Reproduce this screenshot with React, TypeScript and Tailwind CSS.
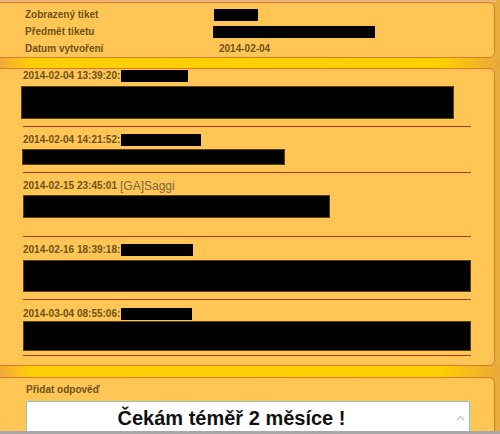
import React from 'react';

type Entry = {
    time: string;
    name?: string;
    hideW?: number;
    boxClass: string;
    head: string;
    after: string;
};

const entries: Entry[] = [
    { time: '2014-02-04 13:39:20:', hideW: 67, head: 'mt-0', boxClass: 'mt-[4px] ml-[-2px] w-[433px] h-[33px]', after: 'h-[6px]' },
    { time: '2014-02-04 14:21:52:', hideW: 80, head: 'mt-[6px]', boxClass: 'mt-[3px] ml-[-1px] w-[263px] h-[16px]', after: 'h-[6px]' },
    { time: '2014-02-15 23:45:01', name: '[GA]Saggi', head: 'mt-[6px]', boxClass: 'mt-[3px] w-[307px] h-[23px]', after: 'h-[17px]' },
    { time: '2014-02-16 18:39:18:', hideW: 72, head: 'mt-[6px]', boxClass: 'mt-[4px] w-[448px] h-[32px]', after: 'h-[6px]' },
    { time: '2014-03-04 08:55:06:', hideW: 71, head: 'mt-[7px]', boxClass: 'mt-[1px] w-[448px] h-[30px]', after: 'h-[3px]' },
];

const Band = ({ h }: { h: string }) => (
    <div className={`${h} shrink-0 bg-[linear-gradient(to_right,#f3a83a_0%,#ffcf06_6%,#ffd000_88%,#e8a83a_100%)]`} />
);

const InfoRow = ({ label, children }: { label: string; children: React.ReactNode }) => (
    <div className="flex items-center h-[17px]">
        <div className="w-[189px] font-bold text-[10px] text-[#6e5218]">{label}</div>
        <div className="flex items-center">{children}</div>
    </div>
);

export default function App() {
    return (
        <div
            className="w-[500px] h-[434px] overflow-hidden flex flex-col bg-[#e6ae3e] relative"
            style={{ fontFamily: '"Liberation Sans", Arial, sans-serif' }}
        >
            <div className="shrink-0 h-[1px] bg-[#eaa79c] mr-[4px]" />
            <div className="shrink-0 h-[1px] bg-[#f6c45a] mr-[4px]" />

            {/* ticket info */}
            <div className="shrink-0 ml-[-6px] mr-[5px] rounded-[6px] border border-[#e2772a] bg-[#ffc655] pt-[3px] pl-[30px]">
                <InfoRow label="Zobrazený tiket">
                    <div className="w-[44px] h-[12px] bg-black" />
                </InfoRow>
                <InfoRow label="Předmět tiketu">
                    <div className="ml-[-1px] w-[162px] h-[12px] bg-black" />
                </InfoRow>
                <InfoRow label="Datum vytvoření">
                    <span className="ml-[5px] font-bold text-[10px] text-[#6e5218]">2014-02-04</span>
                </InfoRow>
            </div>

            <Band h="h-[10px]" />

            {/* messages */}
            <div className="shrink-0 ml-[-6px] mr-[5px] rounded-[6px] border border-[#e2772a] bg-[#ffc655] pl-[28px] pb-[9px]">
                {entries.map((e, i) => (
                    <div key={i}>
                        <div className={`${e.head} flex items-center h-[13px]`}>
                            <span className="font-bold text-[10px] text-[#6e5218] leading-none">{e.time}</span>
                            {e.name ? (
                                <span className="ml-[3px] text-[12px] text-[#7b6746] leading-none">{e.name}</span>
                            ) : (
                                <div className="ml-[1px] h-[12px] bg-black" style={{ width: e.hideW }} />
                            )}
                        </div>
                        <div className={`${e.boxClass} bg-black border border-[#5a4012]`} />
                        <div className={`${e.after} mb-[1px]`} />
                        <div className="w-[448px] h-[1px] bg-[#a8391a]" />
                    </div>
                ))}
            </div>

            <Band h="h-[11px]" />

            {/* reply */}
            <div className="flex-1 ml-[-6px] mr-[5px] rounded-t-[6px] border border-b-0 border-[#e2772a] bg-[#ffc655] pl-[31px] pt-[5px]">
                <div className="font-bold text-[10px] text-[#6e5218] h-[14px] leading-[14px]">Přidat odpověď</div>
                <div className="mt-[4px] w-[444px] h-[40px] bg-white border border-[#86c8c2] flex relative">
                    <div className="flex-1 text-center font-bold text-[20px] text-[#111] leading-none pt-[6px] pr-[16px]">
                        Čekám téměř 2 měsíce !
                    </div>
                    <div className="w-[17px] flex justify-center pt-[13px]">
                        <svg width="9" height="6" viewBox="0 0 9 6">
                            <path d="M1 5 L4.5 1.5 L8 5" fill="none" stroke="#c4c4c4" strokeWidth="1.4" />
                        </svg>
                    </div>
                </div>
            </div>

            <div className="absolute left-0 right-0 bottom-0 h-[3px] bg-[#a7a7a7]" />
        </div>
    );
}
